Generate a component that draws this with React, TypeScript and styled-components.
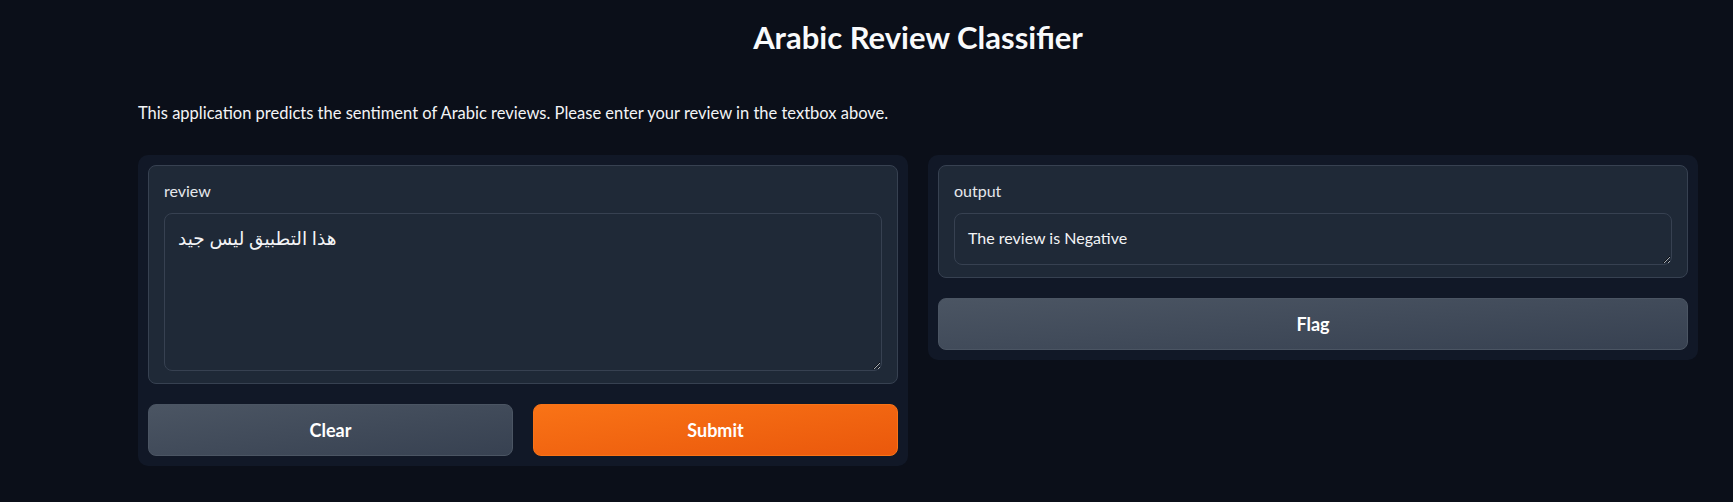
import React from "react";
import styled, { createGlobalStyle } from "styled-components";

const GlobalStyle = createGlobalStyle`
  html, body {
    margin: 0;
    padding: 0;
    background: #0b0f19;
  }
  body {
    font-family: Lato, "DejaVu Sans", sans-serif;
    color: #f3f4f6;
  }
  * { box-sizing: border-box; }
`;

const Main = styled.main`
  width: 1560px;
  margin-left: 138px;
  padding-top: 17px;
  display: flex;
  flex-direction: column;
`;

const Title = styled.h1`
  margin: 0;
  text-align: center;
  font-size: 31px;
  line-height: 40px;
  font-weight: 700;
  color: #f9fafb;
`;

const Description = styled.p`
  margin: 44px 0 0;
  font-size: 16.5px;
  line-height: 24px;
  color: #f3f4f6;
`;

const Row = styled.div`
  margin-top: 30px;
  display: flex;
  gap: 20px;
  align-items: flex-start;
`;

const Panel = styled.div`
  flex: 1 1 0;
  background: #111827;
  border-radius: 10px;
  padding: 10px;
  display: flex;
  flex-direction: column;
  gap: 20px;
`;

const Block = styled.label`
  display: flex;
  flex-direction: column;
  background: #1f2937;
  border: 1px solid #374151;
  border-radius: 8px;
  padding: 15px 15px 12px;
`;

const Label = styled.span`
  font-size: 16px;
  line-height: 20px;
  color: #e5e7eb;
  margin-bottom: 12px;
`;

const TextArea = styled.textarea<{ $h: number; $fs?: number }>`
  display: block;
  width: 100%;
  height: ${(p) => p.$h}px;
  background: #1f2937;
  border: 1px solid #374151;
  border-radius: 8px;
  padding: 12px 13px;
  font-family: Lato, "DejaVu Sans", sans-serif;
  font-size: ${(p) => p.$fs ?? 16}px;
  line-height: 24px;
  color: #f3f4f6;
  resize: vertical;
  outline: none;
  color-scheme: dark;
`;

const ButtonRow = styled.div`
  display: flex;
  gap: 20px;
  & > * {
    flex: 1 1 0;
  }
`;

const Button = styled.button<{ $primary?: boolean }>`
  height: 52px;
  border-radius: 8px;
  border: 1px solid ${(p) => (p.$primary ? "#f97316" : "#4b5563")};
  background: ${(p) =>
    p.$primary
      ? "linear-gradient(to bottom right, #f97316, #ea580c)"
      : "linear-gradient(to bottom right, #4b5563, #374151)"};
  color: #ffffff;
  font-family: Lato, "DejaVu Sans", sans-serif;
  font-size: 18px;
  font-weight: 700;
  cursor: pointer;
`;

export default function App() {
  return (
    <>
      <GlobalStyle />
      <Main>
        <Title>Arabic Review Classifier</Title>
        <Description>
          This application predicts the sentiment of Arabic reviews. Please enter your review in the textbox above.
        </Description>
        <Row>
          <Panel>
            <Block>
              <Label>review</Label>
              <TextArea $h={158} $fs={18.5} defaultValue="هذا التطبيق ليس جيد" />
            </Block>
            <ButtonRow>
              <Button>Clear</Button>
              <Button $primary>Submit</Button>
            </ButtonRow>
          </Panel>
          <Panel>
            <Block>
              <Label>output</Label>
              <TextArea $h={52} readOnly defaultValue="The review is Negative" />
            </Block>
            <Button>Flag</Button>
          </Panel>
        </Row>
      </Main>
    </>
  );
}
